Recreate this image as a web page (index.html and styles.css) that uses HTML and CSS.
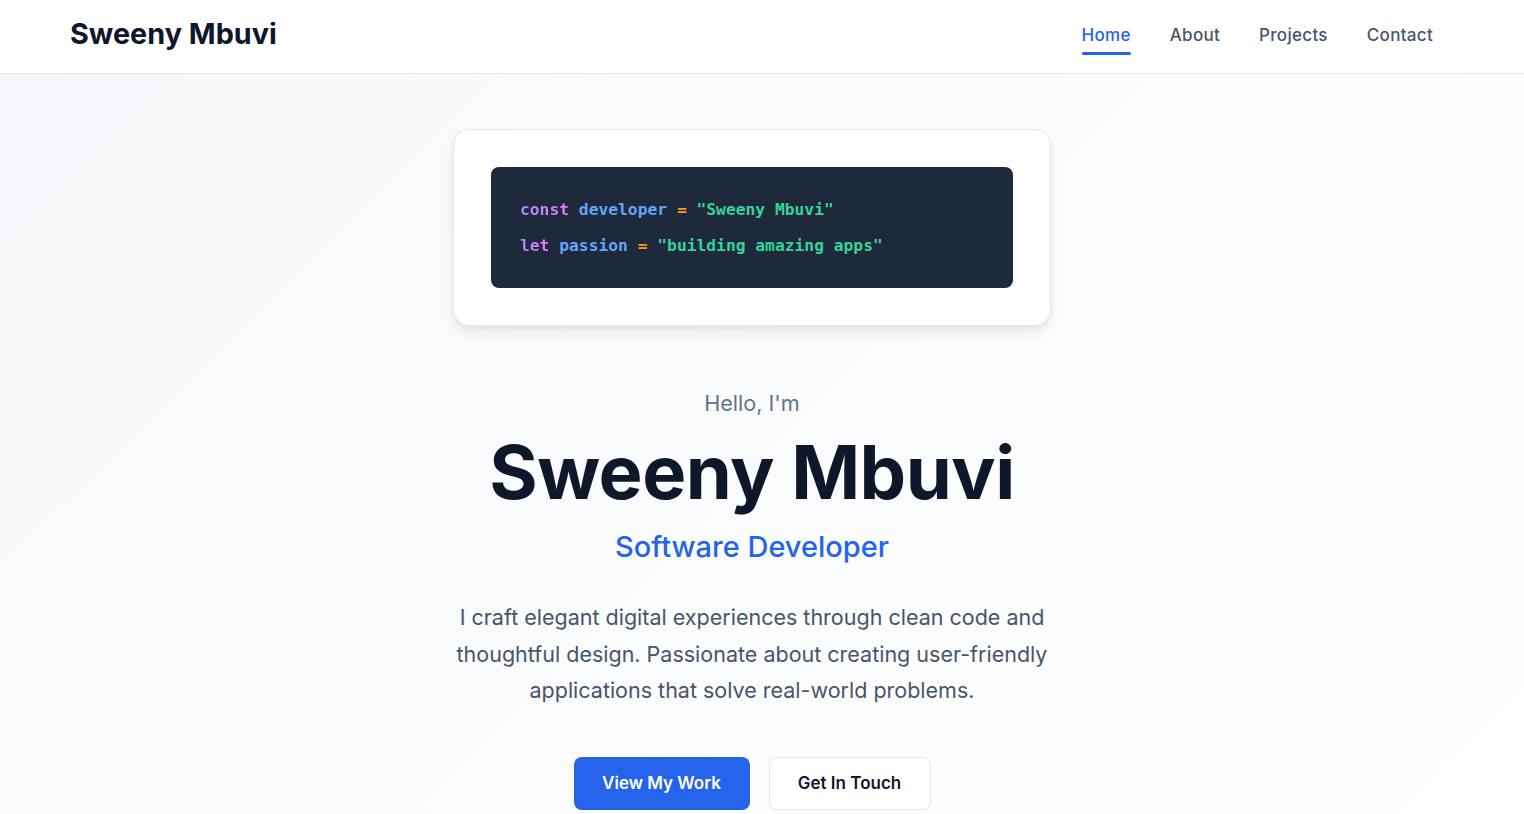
FILE: index.html
```html
<!DOCTYPE html>
<html lang="en">
<head>
<meta charset="utf-8">
<title>Sweeny Mbuvi</title>
<link rel="stylesheet" href="styles.css">
</head>
<body>
<header class="site-header">
  <div class="logo">Sweeny Mbuvi</div>
  <nav class="nav">
    <a class="nav-link active" href="#">Home</a>
    <a class="nav-link" href="#">About</a>
    <a class="nav-link" href="#">Projects</a>
    <a class="nav-link" href="#">Contact</a>
  </nav>
</header>
<main class="hero">
  <div class="code-card">
    <div class="code-block">
      <div class="code-line"><span class="kw">const</span> <span class="var">developer</span> <span class="op">=</span> <span class="str">"Sweeny Mbuvi"</span></div>
      <div class="code-line"><span class="kw">let</span> <span class="var">passion</span> <span class="op">=</span> <span class="str">"building amazing apps"</span></div>
    </div>
  </div>
  <p class="greeting">Hello, I'm</p>
  <h1 class="name">Sweeny Mbuvi</h1>
  <h2 class="role">Software Developer</h2>
  <p class="intro">I craft elegant digital experiences through clean code and thoughtful design. Passionate about creating user-friendly applications that solve real-world problems.</p>
  <div class="actions">
    <a class="btn btn-primary" href="#">View My Work</a>
    <a class="btn btn-secondary" href="#">Get In Touch</a>
  </div>
</main>
</body>
</html>
```
FILE: styles.css
```css
* { box-sizing: border-box; }
html, body { margin: 0; padding: 0; }
body {
  font-family: Inter, "Noto Sans", sans-serif;
  background: linear-gradient(135deg, #f5f7fa 0%, #fafbfc 50%, #ffffff 100%);
  min-height: 814px;
  color: #0f172a;
}
.site-header {
  height: 74px;
  background: #ffffff;
  border-bottom: 1px solid #e2e8f0;
  display: flex;
  align-items: center;
  justify-content: space-between;
  padding: 0 91px 0 70px;
}
.logo {
  font-size: 28.8px;
  font-weight: 700;
  color: #0f172a;
  letter-spacing: 0;
  margin-top: -6px;
}
.nav {
  display: flex;
  gap: 39px;
  margin-top: -4px;
}
.nav-link {
  position: relative;
  font-size: 17px;
  font-weight: 500;
  letter-spacing: 0.3px;
  color: #475569;
  text-decoration: none;
  padding: 8px 0;
}
.nav-link.active { color: #2563eb; }
.nav-link.active::after {
  content: "";
  position: absolute;
  left: 0;
  right: 0;
  bottom: -2px;
  height: 3px;
  border-radius: 2px;
  background: #2563eb;
}
.hero {
  display: flex;
  flex-direction: column;
  align-items: center;
  padding: 55px 20px 0 0;
}
.code-card {
  width: 598px;
  background: #ffffff;
  border: 1px solid #e2e8f0;
  border-radius: 16px;
  padding: 37px;
  box-shadow: 0 8px 16px -4px rgba(15, 23, 42, 0.10), 0 2px 4px rgba(15, 23, 42, 0.04);
}
.code-block {
  background: #1e293b;
  border-radius: 8px;
  padding: 25px 29px 24px;
  font-family: "DejaVu Sans Mono", "Liberation Mono", monospace;
  font-size: 16.3px;
  font-weight: 600;
  line-height: 36px;
}
.code-line { white-space: pre; }
.kw {
  background: linear-gradient(90deg, #a78bfa, #e879f9);
  -webkit-background-clip: text;
  background-clip: text;
  color: transparent;
}
.var { color: #60a5fa; }
.op { color: #f59e0b; }
.str { color: #34d399; }
.greeting {
  margin: 63px 0 0;
  font-size: 21.6px;
  line-height: 28px;
  color: #64748b;
}
.name {
  margin: 10px 0 0;
  font-size: 74px;
  line-height: 90px;
  font-weight: 700;
  letter-spacing: -0.5px;
  color: #0f172a;
}
.role {
  margin: 10px 0 0;
  font-size: 29px;
  line-height: 40px;
  font-weight: 500;
  color: #2563eb;
}
.intro {
  margin: 32px 0 0;
  width: 620px;
  text-align: center;
  font-size: 21.5px;
  line-height: 36.5px;
  color: #475569;
}
.actions {
  display: flex;
  gap: 19px;
  margin-top: 48px;
}
.btn {
  display: inline-flex;
  align-items: center;
  justify-content: center;
  height: 53px;
  border-radius: 8px;
  font-size: 17px;
  font-weight: 600;
  text-decoration: none;
}
.btn-primary {
  width: 176px;
  background: #2563eb;
  color: #ffffff;
}
.btn-secondary {
  width: 162px;
  background: #ffffff;
  color: #0f172a;
  border: 1px solid #e2e8f0;
}
```
